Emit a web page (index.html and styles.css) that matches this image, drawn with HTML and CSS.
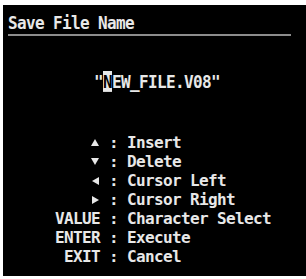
FILE: index.html
```html
<!DOCTYPE html>
<html>
<head>
<meta charset="utf-8">
<link rel="stylesheet" href="styles.css">
</head>
<body>
<div class="screen">
  <div class="title"><span class="tall">Save File Name</span></div>
  <div class="filename"><span class="tall">"<span class="cursor">N</span>EW_FILE.V08"</span></div>
  <div class="keys">
    <div class="label"><svg class="tri" width="8" height="7" viewBox="0 0 8 7"><path d="M4 0 L8 7 L0 7 Z" fill="#e8e8e8"/></svg></div><div class="colon">:</div><div class="desc">Insert</div>
    <div class="label"><svg class="tri" width="8" height="7" viewBox="0 0 8 7"><path d="M0 0 L8 0 L4 7 Z" fill="#e8e8e8"/></svg></div><div class="colon">:</div><div class="desc">Delete</div>
    <div class="label"><svg class="tri" width="7" height="8" viewBox="0 0 7 8"><path d="M7 0 L7 8 L0 4 Z" fill="#e8e8e8"/></svg></div><div class="colon">:</div><div class="desc">Cursor Left</div>
    <div class="label"><svg class="tri" width="7" height="8" viewBox="0 0 7 8"><path d="M0 0 L7 4 L0 8 Z" fill="#e8e8e8"/></svg></div><div class="colon">:</div><div class="desc">Cursor Right</div>
    <div class="label">VALUE</div><div class="colon">:</div><div class="desc">Character Select</div>
    <div class="label">ENTER</div><div class="colon">:</div><div class="desc">Execute</div>
    <div class="label">EXIT</div><div class="colon">:</div><div class="desc">Cancel</div>
  </div>
</div>
</body>
</html>
```
FILE: styles.css
```css
html, body {
  margin: 0;
  padding: 0;
  background: #ffffff;
}
body {
  padding: 5px 0 3px 3px;
}
.screen {
  width: 303px;
  height: 271px;
  background: #000000;
  color: #e8e8e8;
  font-family: "DejaVu Sans Mono", "Liberation Mono", monospace;
  font-size: 16px;
  letter-spacing: -0.63px;
  box-sizing: border-box;
  padding: 8px 0 0 5px;
  overflow: hidden;
}
.tall {
  display: inline-block;
  transform: scaleY(1.1);
}
.title {
  width: 283px;
  font-weight: bold;
  line-height: 20px;
  padding-bottom: 1px;
  border-bottom: 2px solid #8c8c8c;
}
.filename {
  margin-top: 36px;
  width: 298px;
  text-align: center;
  line-height: 20px;
  font-weight: bold;
}
.cursor {
  background: #e8e8e8;
  color: #000;
}
.keys {
  margin-top: 41px;
  margin-left: 32px;
  display: grid;
  grid-template-columns: 60px 9px auto;
  column-gap: 9px;
  line-height: 19px;
  font-weight: bold;
}
.label {
  text-align: right;
  display: flex;
  justify-content: flex-end;
  align-items: center;
}
.tri {
  display: block;
  margin-right: 1px;
}
.colon {
  text-align: center;
}
```
